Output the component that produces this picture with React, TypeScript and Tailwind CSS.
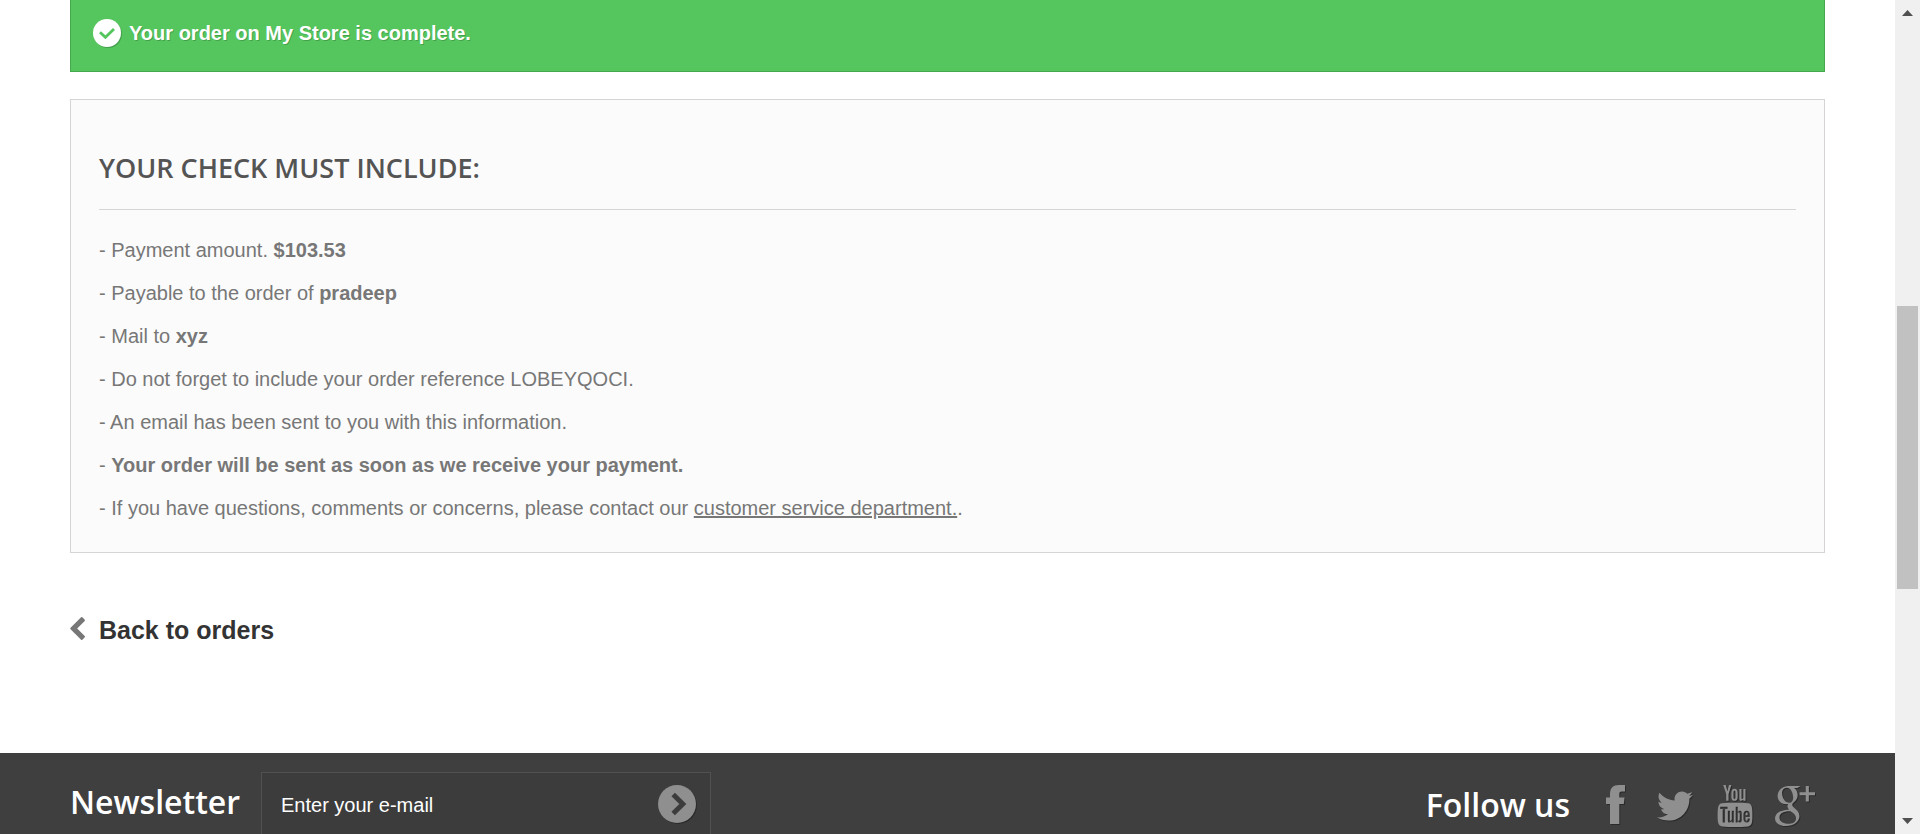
import type { ReactNode } from "react";
import { FaTwitter } from "react-icons/fa";
import { TfiGoogle, TfiYoutube } from "react-icons/tfi";

function CheckCircle() {
  return (
    <svg viewBox="0 0 28 28" className="size-7 shrink-0 drop-shadow-[1px_1px_0_rgba(0,0,0,0.2)]" aria-hidden="true">
      <circle cx="14" cy="14" r="14" fill="#ffffff" />
      <path d="M7 13.2 12.4 18.3 21 10" fill="none" stroke="#55c65e" strokeWidth="2.8" />
    </svg>
  );
}

function ChevronLeft() {
  return (
    <svg viewBox="390 26 1056 1612" className="mb-[3px] h-[23px] w-[15px] shrink-0 fill-[#777777]" aria-hidden="true">
      <path d="M1427 301l-531 531 531 531q19 19 19 45t-19 45l-166 166q-19 19-45 19t-45-19l-742-742q-19-19-19-45t19-45l742-742q19-19 45-19t45 19l166 166q19 19 19 45t-19 45z" />
    </svg>
  );
}

function SubmitIcon() {
  return (
    <svg viewBox="0 0 38 38" className="size-[38px] drop-shadow-[1px_1px_0_#2a2a2a]" aria-hidden="true">
      <circle cx="19" cy="19" r="19" fill="#908f8f" />
      <path d="M15.2 9.5 24.8 19 15.2 28.5" fill="none" stroke="#3c3c3c" strokeWidth="5" />
    </svg>
  );
}

function Facebook() {
  return (
    <svg viewBox="0 0 19 39" className="mb-[3px] h-[39px] w-[19px] fill-current" aria-hidden="true">
      <path d="M13.3 39H4V19H0V12.5H4V9C4 3 7 0 13 0H19V6.5H15.5C13.8 6.5 13.3 7.4 13.3 9V12.5H18.5L17.8 19H13.3Z" />
    </svg>
  );
}

const social: { name: string; icon: ReactNode }[] = [
  { name: "Facebook", icon: <Facebook /> },
  { name: "Twitter", icon: <FaTwitter className="size-9" /> },
  { name: "YouTube", icon: <TfiYoutube className="size-[42px]" /> },
  { name: "Google Plus", icon: <TfiGoogle className="size-10" /> },
];

function Scrollbar() {
  return (
    <div className="flex w-[25px] shrink-0 flex-col bg-[#f0f0f0]">
      <button type="button" aria-label="Scroll up" className="flex h-[26px] items-center justify-center">
        <svg viewBox="0 0 11 6" className="h-[6px] w-[11px] fill-[#505050]" aria-hidden="true">
          <path d="M0 6 5.5 0 11 6Z" />
        </svg>
      </button>
      <div className="flex flex-1 flex-col px-[2px]">
        <div className="flex-[280]" />
        <div className="flex-[283] bg-[#c1c1c1]" />
        <div className="flex-[219]" />
      </div>
      <button type="button" aria-label="Scroll down" className="flex h-[26px] items-center justify-center">
        <svg viewBox="0 0 11 6" className="h-[6px] w-[11px] fill-[#505050]" aria-hidden="true">
          <path d="M0 0 5.5 6 11 0Z" />
        </svg>
      </button>
    </div>
  );
}

export default function App() {
  return (
    <div className="flex h-screen overflow-hidden bg-white font-['Liberation_Sans',Arial,sans-serif] text-[20px] leading-7 text-[#777777]">
      <div className="flex min-w-0 flex-1 flex-col">
        <main className="px-[70px] pb-[103px]">
          <p className="flex items-center gap-2 border border-t-0 border-[#46a74e] bg-[#55c65e] pt-[19px] pr-6 pb-6 pl-[22px] font-bold text-white text-shadow-[1px_1px_0_rgba(0,0,0,0.2)]">
            <CheckCircle />
            Your order on My Store is complete.
          </p>

          <section className="mt-[27px] border border-[#d6d4d4] bg-[#fbfbfb] px-7 pt-12 pb-[30px]">
            <h1 className="border-b border-[#d6d4d4] pb-[21px] font-['Open_Sans',sans-serif] text-[27px] leading-10 font-semibold text-[#555454]">
              YOUR CHECK MUST INCLUDE:
            </h1>
            <ul className="mt-[26px] flex flex-col gap-[15px]">
              <li>- Payment amount. <strong>$103.53</strong></li>
              <li>- Payable to the order of <strong>pradeep</strong></li>
              <li>- Mail to <strong>xyz</strong></li>
              <li>- Do not forget to include your order reference LOBEYQOCI.</li>
              <li>- An email has been sent to you with this information.</li>
              <li>- <strong>Your order will be sent as soon as we receive your payment.</strong></li>
              <li>
                - If you have questions, comments or concerns, please contact our{" "}
                <a href="#contact" className="underline">customer service department.</a>.
              </li>
            </ul>
          </section>

          <a href="#orders" className="mt-[57px] flex w-fit items-center gap-[14px] text-[25px] leading-10 font-bold text-[#333333]">
            <ChevronLeft />
            Back to orders
          </a>
        </main>

        <footer className="flex flex-1 items-start justify-between bg-[#3f3f3f] px-[70px] pt-[19px] text-white">
          <form className="flex items-start">
            <label htmlFor="email" className="w-[191px] pt-[10px] font-['Open_Sans',sans-serif] text-[32px] leading-10 font-semibold">
              Newsletter
            </label>
            <div className="flex w-[450px] items-start border border-b-0 border-[#515151] bg-[#3c3c3c] pt-3 pr-[14px] pb-3 pl-[19px]">
              <input
                id="email"
                type="email"
                placeholder="Enter your e-mail"
                className="h-10 min-w-0 flex-1 bg-transparent outline-none placeholder:text-white"
              />
              <button type="submit" aria-label="Subscribe">
                <SubmitIcon />
              </button>
            </div>
          </form>

          <section className="flex items-start pt-[13px]">
            <h2 className="pr-[15px] font-['Open_Sans',sans-serif] text-[32px] leading-10 font-semibold">Follow us</h2>
            <ul className="flex">
              {social.map((item) => (
                <li key={item.name} className="flex w-[60px] justify-center">
                  <a href="#social" aria-label={item.name} className="flex h-[42px] items-center text-[#908f8f] drop-shadow-[1px_1px_0_#2a2a2a]">
                    {item.icon}
                  </a>
                </li>
              ))}
            </ul>
          </section>
        </footer>
      </div>
      <Scrollbar />
    </div>
  );
}
